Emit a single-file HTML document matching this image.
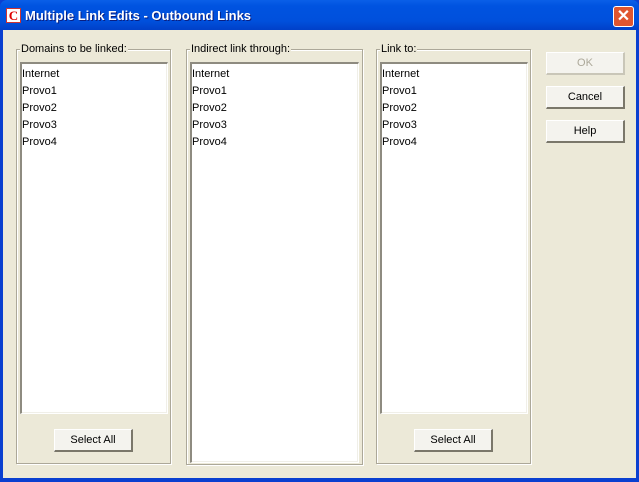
<!DOCTYPE html><html><head><style>
*{margin:0;padding:0;box-sizing:border-box}
body{width:639px;height:482px;overflow:hidden;font-family:"Liberation Sans",sans-serif;font-size:11px;background:#0a3fd0;position:relative}
.tb{position:absolute;left:0;top:0;width:639px;height:30px;background:linear-gradient(#0a5fe8,#0053e0 20%,#0050dc 70%,#0040c8);border-radius:7px 7px 0 0}
.title{position:absolute;left:25px;top:8px;color:#fff;font-weight:bold;font-size:13px;text-shadow:1px 1px #0a1f80}
.ico{position:absolute;left:6px;top:8px;width:15px;height:15px;background:#fff;border:1px solid #c33;color:#d00;font:bold 13px "Liberation Serif",serif;line-height:13px;text-align:center}
.x{position:absolute;left:613px;top:6px;width:21px;height:21px;background:#e0552f;border:1px solid #fff;border-radius:3px;color:#fff;font:bold 16px "Liberation Sans";text-align:center;line-height:19px}
.body{position:absolute;left:3px;top:30px;width:633px;height:448px;background:#ece9d8}
.grp{position:absolute;border:1px solid #aca899;box-shadow:inset 1px 1px #fff,1px 1px #fff}
.lbl{position:absolute;top:-7px;left:3px;background:#ece9d8;padding:0 1px;color:#000}
.lst{position:absolute;background:#fff;border:1px solid #fff;border-top:2px solid #8e8b80;border-left:2px solid #8e8b80;box-shadow:inset -1px -1px #f0efe8;padding-top:2px}
.lst div{height:17px;line-height:17px;padding-left:0}
.btn{position:absolute;width:79px;height:23px;background:#f4f3ee;border:1px solid #fff;border-right:2px solid #7a776a;border-bottom:2px solid #7a776a;text-align:center;line-height:21px;color:#000}
</style></head><body>
<div class="tb"><div class="ico">C</div><div class="title">Multiple Link Edits - Outbound Links</div><div class="x">✕</div></div>
<div class="body">
<div class="grp" style="left:13px;top:19px;width:155px;height:415px"><span class="lbl">Domains to be linked:</span>
<div class="lst" style="left:3px;top:12px;width:148px;height:352px"><div>Internet</div><div>Provo1</div><div>Provo2</div><div>Provo3</div><div>Provo4</div></div>
<div class="btn" style="left:37px;top:379px">Select All</div></div>
<div class="grp" style="left:183px;top:19px;width:177px;height:416px"><span class="lbl">Indirect link through:</span>
<div class="lst" style="left:3px;top:12px;width:169px;height:401px"><div>Internet</div><div>Provo1</div><div>Provo2</div><div>Provo3</div><div>Provo4</div></div></div>
<div class="grp" style="left:373px;top:19px;width:155px;height:415px"><span class="lbl">Link to:</span>
<div class="lst" style="left:3px;top:12px;width:148px;height:352px"><div>Internet</div><div>Provo1</div><div>Provo2</div><div>Provo3</div><div>Provo4</div></div>
<div class="btn" style="left:37px;top:379px">Select All</div></div>
<div class="btn" style="left:543px;top:22px;color:#aca899;border-right-color:#c9c6b8;border-bottom-color:#c9c6b8">OK</div>
<div class="btn" style="left:543px;top:56px">Cancel</div>
<div class="btn" style="left:543px;top:90px">Help</div>
</div>
</body></html>
